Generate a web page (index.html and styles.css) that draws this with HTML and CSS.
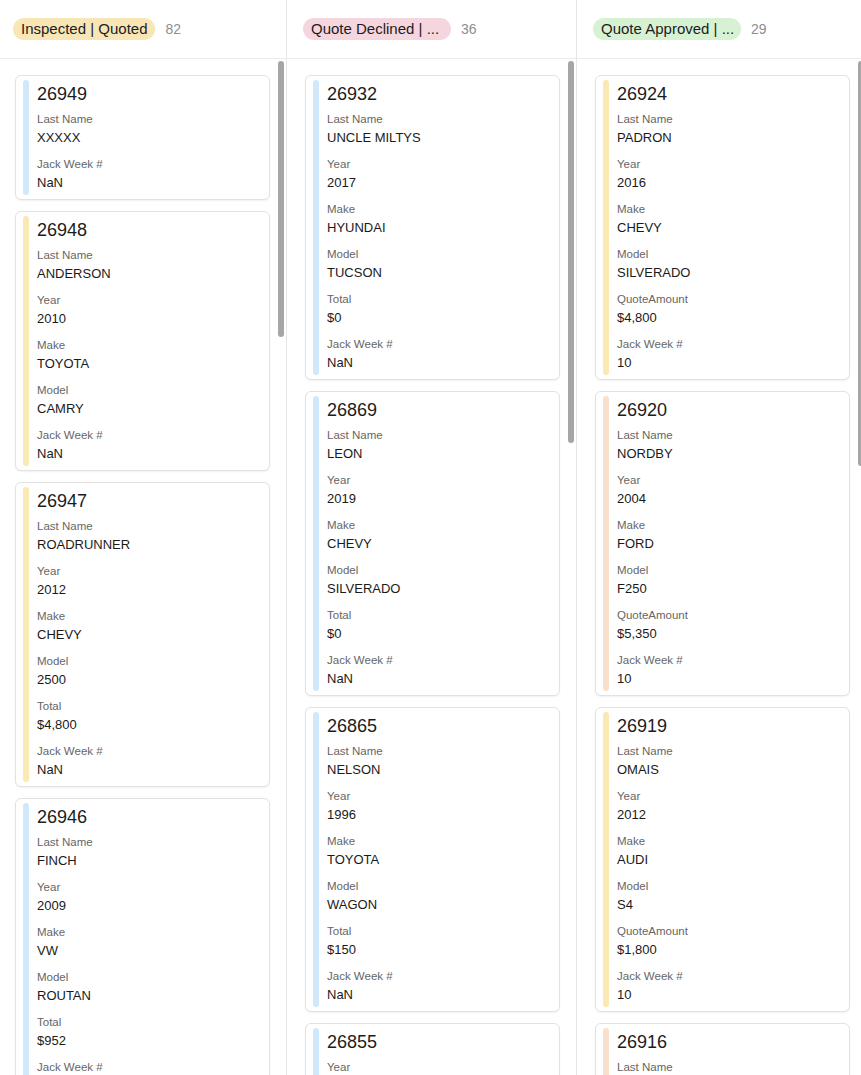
FILE: index.html
```html
<!DOCTYPE html>
<html lang="en">
<head>
    <meta charset="UTF-8">
    <meta name="viewport" content="width=device-width, initial-scale=1.0">
    <title>Board</title>
    <link rel="stylesheet" href="styles.css">
</head>
<body>
    <div class="board">
        <!-- Inspected | Quoted -->
        <div class="column">
            <div class="col-head">
                <span class="pill pill-yellow">Inspected | Quoted</span>
                <span class="count">82</span>
            </div>
            <div class="col-list">
                <div class="thumb thumb-1"></div>
                <div class="card">
                    <div class="bar bar-blue"></div>
                    <div class="card-body">
                        <h3 class="card-title">26949</h3>
                        <div class="field"><p class="label">Last Name</p><p class="value">XXXXX</p></div>
                        <div class="field"><p class="label">Jack Week #</p><p class="value">NaN</p></div>
                    </div>
                </div>
                <div class="card">
                    <div class="bar bar-yellow"></div>
                    <div class="card-body">
                        <h3 class="card-title">26948</h3>
                        <div class="field"><p class="label">Last Name</p><p class="value">ANDERSON</p></div>
                        <div class="field"><p class="label">Year</p><p class="value">2010</p></div>
                        <div class="field"><p class="label">Make</p><p class="value">TOYOTA</p></div>
                        <div class="field"><p class="label">Model</p><p class="value">CAMRY</p></div>
                        <div class="field"><p class="label">Jack Week #</p><p class="value">NaN</p></div>
                    </div>
                </div>
                <div class="card">
                    <div class="bar bar-yellow"></div>
                    <div class="card-body">
                        <h3 class="card-title">26947</h3>
                        <div class="field"><p class="label">Last Name</p><p class="value">ROADRUNNER</p></div>
                        <div class="field"><p class="label">Year</p><p class="value">2012</p></div>
                        <div class="field"><p class="label">Make</p><p class="value">CHEVY</p></div>
                        <div class="field"><p class="label">Model</p><p class="value">2500</p></div>
                        <div class="field"><p class="label">Total</p><p class="value">$4,800</p></div>
                        <div class="field"><p class="label">Jack Week #</p><p class="value">NaN</p></div>
                    </div>
                </div>
                <div class="card">
                    <div class="bar bar-blue"></div>
                    <div class="card-body">
                        <h3 class="card-title">26946</h3>
                        <div class="field"><p class="label">Last Name</p><p class="value">FINCH</p></div>
                        <div class="field"><p class="label">Year</p><p class="value">2009</p></div>
                        <div class="field"><p class="label">Make</p><p class="value">VW</p></div>
                        <div class="field"><p class="label">Model</p><p class="value">ROUTAN</p></div>
                        <div class="field"><p class="label">Total</p><p class="value">$952</p></div>
                        <div class="field"><p class="label">Jack Week #</p><p class="value">NaN</p></div>
                    </div>
                </div>
            </div>
        </div>

        <!-- Quote Declined -->
        <div class="column">
            <div class="col-head">
                <span class="pill pill-pink pill-cut">Quote Declined | ...</span>
                <span class="count">36</span>
            </div>
            <div class="col-list">
                <div class="thumb thumb-2"></div>
                <div class="card">
                    <div class="bar bar-blue"></div>
                    <div class="card-body">
                        <h3 class="card-title">26932</h3>
                        <div class="field"><p class="label">Last Name</p><p class="value">UNCLE MILTYS</p></div>
                        <div class="field"><p class="label">Year</p><p class="value">2017</p></div>
                        <div class="field"><p class="label">Make</p><p class="value">HYUNDAI</p></div>
                        <div class="field"><p class="label">Model</p><p class="value">TUCSON</p></div>
                        <div class="field"><p class="label">Total</p><p class="value">$0</p></div>
                        <div class="field"><p class="label">Jack Week #</p><p class="value">NaN</p></div>
                    </div>
                </div>
                <div class="card">
                    <div class="bar bar-blue"></div>
                    <div class="card-body">
                        <h3 class="card-title">26869</h3>
                        <div class="field"><p class="label">Last Name</p><p class="value">LEON</p></div>
                        <div class="field"><p class="label">Year</p><p class="value">2019</p></div>
                        <div class="field"><p class="label">Make</p><p class="value">CHEVY</p></div>
                        <div class="field"><p class="label">Model</p><p class="value">SILVERADO</p></div>
                        <div class="field"><p class="label">Total</p><p class="value">$0</p></div>
                        <div class="field"><p class="label">Jack Week #</p><p class="value">NaN</p></div>
                    </div>
                </div>
                <div class="card">
                    <div class="bar bar-blue"></div>
                    <div class="card-body">
                        <h3 class="card-title">26865</h3>
                        <div class="field"><p class="label">Last Name</p><p class="value">NELSON</p></div>
                        <div class="field"><p class="label">Year</p><p class="value">1996</p></div>
                        <div class="field"><p class="label">Make</p><p class="value">TOYOTA</p></div>
                        <div class="field"><p class="label">Model</p><p class="value">WAGON</p></div>
                        <div class="field"><p class="label">Total</p><p class="value">$150</p></div>
                        <div class="field"><p class="label">Jack Week #</p><p class="value">NaN</p></div>
                    </div>
                </div>
                <div class="card">
                    <div class="bar bar-blue"></div>
                    <div class="card-body">
                        <h3 class="card-title">26855</h3>
                        <div class="field"><p class="label">Year</p><p class="value">2015</p></div>
                        <div class="field"><p class="label">Jack Week #</p><p class="value">NaN</p></div>
                    </div>
                </div>
            </div>
        </div>

        <!-- Quote Approved -->
        <div class="column">
            <div class="col-head">
                <span class="pill pill-green pill-cut">Quote Approved | ...</span>
                <span class="count">29</span>
            </div>
            <div class="col-list">
                <div class="thumb thumb-3"></div>
                <div class="card">
                    <div class="bar bar-yellow"></div>
                    <div class="card-body">
                        <h3 class="card-title">26924</h3>
                        <div class="field"><p class="label">Last Name</p><p class="value">PADRON</p></div>
                        <div class="field"><p class="label">Year</p><p class="value">2016</p></div>
                        <div class="field"><p class="label">Make</p><p class="value">CHEVY</p></div>
                        <div class="field"><p class="label">Model</p><p class="value">SILVERADO</p></div>
                        <div class="field"><p class="label">QuoteAmount</p><p class="value">$4,800</p></div>
                        <div class="field"><p class="label">Jack Week #</p><p class="value">10</p></div>
                    </div>
                </div>
                <div class="card">
                    <div class="bar bar-peach"></div>
                    <div class="card-body">
                        <h3 class="card-title">26920</h3>
                        <div class="field"><p class="label">Last Name</p><p class="value">NORDBY</p></div>
                        <div class="field"><p class="label">Year</p><p class="value">2004</p></div>
                        <div class="field"><p class="label">Make</p><p class="value">FORD</p></div>
                        <div class="field"><p class="label">Model</p><p class="value">F250</p></div>
                        <div class="field"><p class="label">QuoteAmount</p><p class="value">$5,350</p></div>
                        <div class="field"><p class="label">Jack Week #</p><p class="value">10</p></div>
                    </div>
                </div>
                <div class="card">
                    <div class="bar bar-yellow"></div>
                    <div class="card-body">
                        <h3 class="card-title">26919</h3>
                        <div class="field"><p class="label">Last Name</p><p class="value">OMAIS</p></div>
                        <div class="field"><p class="label">Year</p><p class="value">2012</p></div>
                        <div class="field"><p class="label">Make</p><p class="value">AUDI</p></div>
                        <div class="field"><p class="label">Model</p><p class="value">S4</p></div>
                        <div class="field"><p class="label">QuoteAmount</p><p class="value">$1,800</p></div>
                        <div class="field"><p class="label">Jack Week #</p><p class="value">10</p></div>
                    </div>
                </div>
                <div class="card">
                    <div class="bar bar-peach"></div>
                    <div class="card-body">
                        <h3 class="card-title">26916</h3>
                        <div class="field"><p class="label">Last Name</p><p class="value">GARCIA</p></div>
                        <div class="field"><p class="label">Jack Week #</p><p class="value">10</p></div>
                    </div>
                </div>
            </div>
        </div>
    </div>
</body>
</html>
```

FILE: styles.css
```css
* {
    margin: 0;
    padding: 0;
    box-sizing: border-box;
}

body {
    background: #fff;
    font-family: "Liberation Sans", Arial, Helvetica, sans-serif;
    color: #1f1f1f;
    height: 1075px;
    overflow: hidden;
}

/* board is scrolled a little to the right */
.board {
    display: flex;
    margin-left: -3px;
    height: 100%;
}

.column {
    flex: 0 0 290px;
    width: 290px;
    border-right: 1px solid #e6e6e6;
    display: flex;
    flex-direction: column;
    height: 100%;
}

.col-head {
    height: 59px;
    border-bottom: 1px solid #ebebeb;
    display: flex;
    align-items: center;
    padding-left: 16px;
    gap: 10px;
}

.pill {
    display: inline-block;
    height: 22px;
    line-height: 22px;
    padding: 0 8px;
    border-radius: 11px;
    font-size: 15px;
    color: #1c1c1c;
    white-space: nowrap;
}

/* titles that the board shortened */
.pill-cut {
    width: 148px;
    overflow: hidden;
}

.pill-yellow { background: #f8e6b6; }
.pill-pink { background: #f6d6de; }
.pill-green { background: #d7f2d3; }

.count {
    font-size: 14px;
    color: #8e8e8e;
}

.col-list {
    position: relative;
    flex: 1;
    overflow: hidden;
    padding: 16px 16px 0 18px;
    display: flex;
    flex-direction: column;
    gap: 11px;
}

/* overlay scrollbar thumb */
.thumb {
    position: absolute;
    top: 2px;
    right: 2px;
    width: 6px;
    border-radius: 3px;
    background: #a6a6a6;
}
.thumb-1 { height: 276px; }
.thumb-2 { height: 382px; }
.thumb-3 { height: 405px; }

.card {
    flex: 0 0 auto;
    display: flex;
    border: 1px solid #e2e2e2;
    border-radius: 6px;
    box-shadow: 0 1px 2px rgba(0, 0, 0, 0.06);
    padding: 4px 8px 4px 7px;
    background: #fff;
}

.bar {
    width: 6px;
    border-radius: 3px;
    flex: 0 0 6px;
}
.bar-blue { background: #cfe8fc; }
.bar-yellow { background: #fbe9b4; }
.bar-peach { background: #fadfcb; }

.card-body {
    margin-left: 8px;
    padding-bottom: 3px;
}

.card-title {
    font-size: 18px;
    font-weight: 400;
    line-height: 24px;
    margin-top: 2px;
    color: #1c1c1c;
}

.field {
    margin-top: 10px;
}

.card-title + .field {
    margin-top: 6px;
}

.label {
    font-size: 11.5px;
    line-height: 15px;
    color: #666;
}

.value {
    font-size: 13px;
    line-height: 18px;
    margin-top: 2px;
    color: #1a1a1a;
}
```
